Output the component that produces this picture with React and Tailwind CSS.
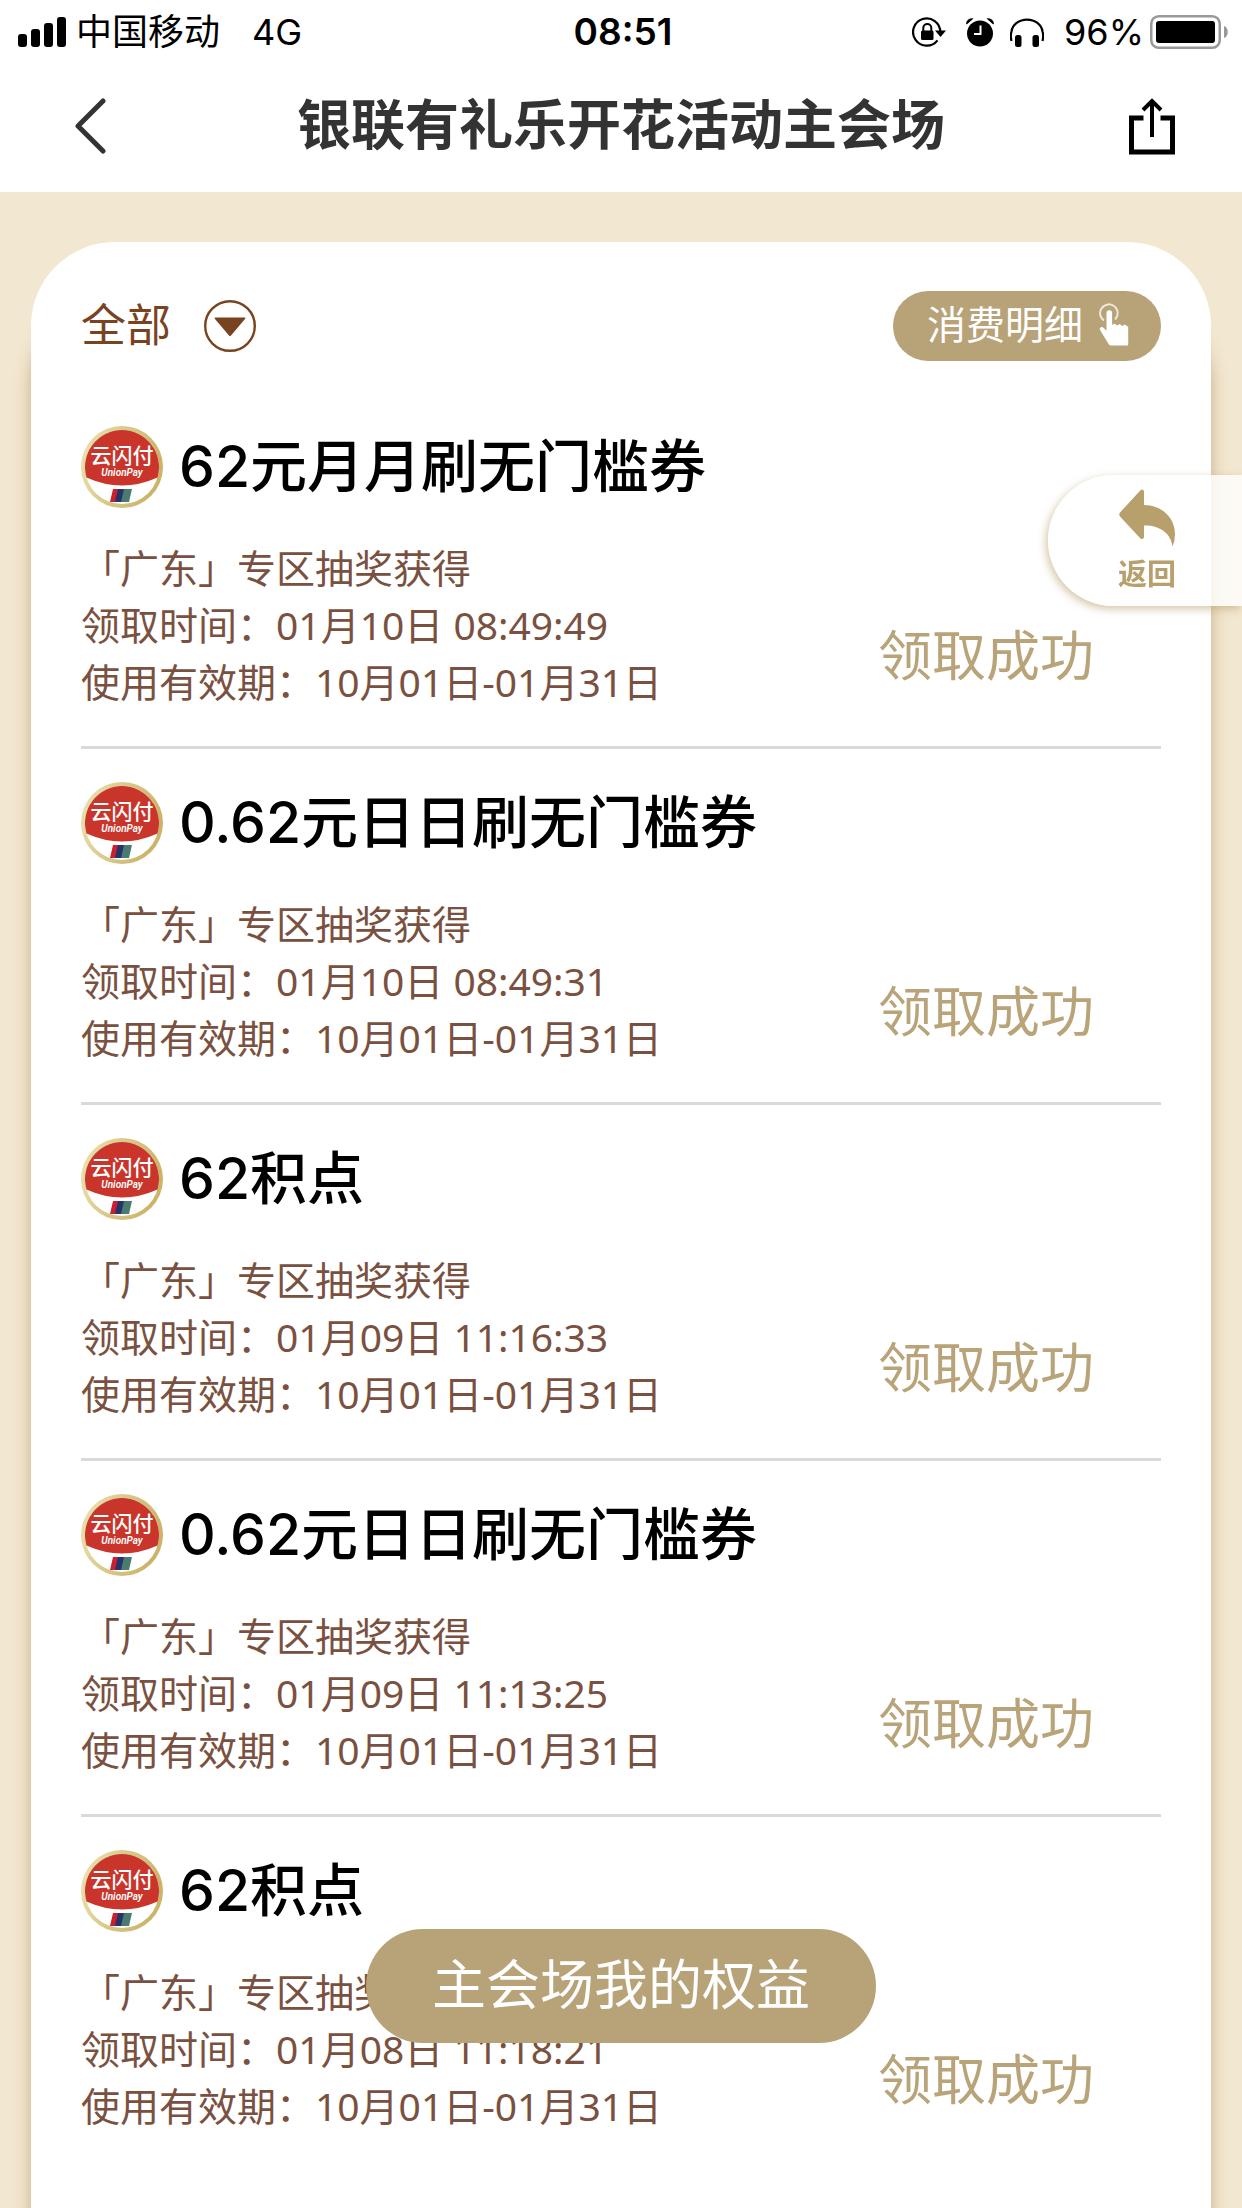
import React, { useState } from 'react';

const registros = [
    { id: 1, titulo: '62元月月刷无门槛券', hora: '01月10日 08:49:49' },
    { id: 2, titulo: '0.62元日日刷无门槛券', hora: '01月10日 08:49:31' },
    { id: 3, titulo: '62积点', hora: '01月09日 11:16:33' },
    { id: 4, titulo: '0.62元日日刷无门槛券', hora: '01月09日 11:13:25' },
    { id: 5, titulo: '62积点', hora: '01月08日 11:18:21' },
];

const SignalIcon = () => (
    <svg width="48" height="30" viewBox="0 0 48 30" aria-hidden="true">
        <rect x="0" y="17" width="9" height="13" rx="3" />
        <rect x="13" y="12" width="9" height="18" rx="3" />
        <rect x="26" y="6" width="9" height="24" rx="3" />
        <rect x="39" y="0" width="9" height="30" rx="3" />
    </svg>
);

const RotationLockIcon = () => (
    <svg width="34" height="30" viewBox="0 0 34 30" fill="none" aria-hidden="true">
        <path d="M28.3 15A13.6 13.6 0 1 0 25.5 23.3" stroke="#000" strokeWidth="2.2" />
        <path d="M23 13.5h11l-5.5 6.5z" fill="#000" />
        <rect x="9" y="13.5" width="12.5" height="9.5" rx="1.5" fill="#000" />
        <path d="M11.3 14v-3a4 4 0 0 1 8 0v3" stroke="#000" strokeWidth="2" />
    </svg>
);

const AlarmIcon = () => (
    <svg width="28" height="29" viewBox="0 0 28 29" aria-hidden="true">
        <circle cx="14" cy="15.5" r="13" />
        <path d="M0 5.5A6 6 0 0 1 7.5 0.5L0.8 6.5zM28 5.5A6 6 0 0 0 20.5 0.5L27.2 6.5z" />
        <path d="M14.5 7.5v8.5h-6.5" fill="none" stroke="#fff" strokeWidth="2" />
    </svg>
);

const HeadphonesIcon = () => (
    <svg width="34" height="30" viewBox="0 0 34 30" aria-hidden="true">
        <path d="M1.5 24C0.5 20 1 16 1.5 14.5a15.6 13.5 0 0 1 31 0C33 16 33.5 20 32.5 24" fill="none" stroke="#000" strokeWidth="2.2" />
        <rect x="5" y="18" width="6.5" height="12" rx="2.5" />
        <rect x="22.5" y="18" width="6.5" height="12" rx="2.5" />
    </svg>
);

const BatteryIcon = () => (
    <svg width="78" height="34" viewBox="0 0 78 34" aria-hidden="true">
        <rect x="1.25" y="1.25" width="68.5" height="31.5" rx="7.5" fill="none" stroke="#999" strokeWidth="2.5" />
        <rect x="6" y="6" width="59" height="22" rx="3" />
        <path d="M74 11c5 1 5 11 0 12z" fill="#999" />
    </svg>
);

const UnionPayLogo = () => (
    <svg className="shrink-0" width="82" height="82" viewBox="0 0 82 82" role="img" aria-label="云闪付">
        <defs>
            <linearGradient id="aro" x1="0" y1="0" x2="1" y2="0.3">
                <stop offset="0" stopColor="#efe5b0" />
                <stop offset="0.5" stopColor="#d9ca8c" />
                <stop offset="1" stopColor="#cbb468" />
            </linearGradient>
        </defs>
        <circle cx="41" cy="41" r="41" fill="url(#aro)" />
        <circle cx="41" cy="41" r="37" fill="#fff" />
        <path d="M5.5 51.5A37 37 0 1 1 76.5 51.5Q41 67.5 5.5 51.5z" fill="#c9352b" />
        <text x="41" y="37" textAnchor="middle" fill="#fff" fontSize="21" fontWeight="500" fontFamily="Noto Sans CJK SC, sans-serif">云闪付</text>
        <text x="41" y="50" textAnchor="middle" fill="#fff" fontSize="10" fontWeight="600" fontStyle="italic" fontFamily="Roboto, sans-serif">UnionPay</text>
        <path d="M32 63h7l-3 13h-7z" fill="#c8202f" />
        <path d="M37 63h7l-3 13h-7z" fill="#25336b" />
        <path d="M43 63h8l-3 13h-8z" fill="#4b7b70" />
    </svg>
);

const TapIcon = () => (
    <svg width="30" height="44" viewBox="0 0 30 44" fill="none" aria-hidden="true">
        <path d="M5 17.5A8.8 8.8 0 1 1 16 16.5" stroke="#fff" strokeOpacity="0.75" strokeWidth="2" />
        <path d="M7.5 10a2.8 2.8 0 0 1 5.6 0v12l2.4-1.5 2.6 2 2.6-1.5 2.6 2 2.6-1.5 3.3 2.5v17.5q0 1-1 1H12q-1.5 0-2.3-1.2L.8 26.5q-.6-1.8 1.2-2.3 1.6-.4 3 1l2.5 2.5z" fill="#fff" />
    </svg>
);

const Registro = ({ titulo, hora }) => (
    <li className="border-b-3 border-[#d9d9d9] pt-8 pb-9 last:border-b-0">
        <div className="flex h-[84px] items-center gap-4">
            <UnionPayLogo />
            <h2 className="text-[57px] leading-[84px] font-medium text-black">{titulo}</h2>
        </div>
        <div className="mt-[30px] flex justify-between pr-[67px]">
            <div className="font-['Noto_Sans','Noto_Sans_CJK_SC',sans-serif] text-[39px] leading-[57px] text-[#7a5140]">
                <p>「广东」专区抽奖获得</p>
                <p>领取时间：{hora}</p>
                <p>使用有效期：10月01日-01月31日</p>
            </div>
            <p className="self-end pb-[26px] text-[54px] leading-[54px] text-[#b8a478]">领取成功</p>
        </div>
    </li>
);

export default function App() {
    const [filtro, setFiltro] = useState('all');

    return (
        <div className="flex min-h-screen flex-col bg-[#f2e7d0] font-['Inter','Noto_Sans_CJK_SC',sans-serif]">
            <header className="bg-white">
                {/* Barra de estado */}
                <div className="grid h-16 grid-cols-[1fr_auto_1fr] items-center pr-3.5 pl-[18px] text-[36px] leading-[60px] text-black">
                    <div className="flex items-center">
                        <SignalIcon />
                        <span className="ml-2.5">中国移动</span>
                        <span className="ml-8">4G</span>
                    </div>
                    <span className="text-[37px] font-semibold">08:51</span>
                    <div className="flex items-center justify-end">
                        <RotationLockIcon />
                        <span className="ml-5"><AlarmIcon /></span>
                        <span className="ml-4"><HeadphonesIcon /></span>
                        <span className="ml-5">96%</span>
                        <span className="ml-1.5"><BatteryIcon /></span>
                    </div>
                </div>

                {/* Navegación */}
                <div className="flex h-32 items-center justify-between pr-[66px] pb-1 pl-[72px]">
                    <button type="button" aria-label="返回上一页" className="w-[42px]">
                        <svg width="36" height="56" viewBox="0 0 36 56" fill="none">
                            <path d="M31 3L6 28l25 25" stroke="#333" strokeWidth="5" strokeLinecap="round" strokeLinejoin="round" />
                        </svg>
                    </button>
                    <h1 className="text-[54px] leading-[72px] font-bold text-[#333]">银联有礼乐开花活动主会场</h1>
                    <button type="button" aria-label="分享">
                        <svg width="48" height="58" viewBox="0 0 48 58" fill="none" stroke="#000">
                            <path d="M15.5 21H3.5V55H44.5V21H32.5" strokeWidth="5" />
                            <path d="M24 40V3M15 13l9-9 9 9" strokeWidth="4" />
                        </svg>
                    </button>
                </div>
            </header>

            <main className="mx-[31px] mt-[50px] flex-1 rounded-t-[84px] bg-white px-[50px] pt-[49px] shadow-[0_60px_16px_rgba(160,115,65,0.5)]">
                <div className="flex h-[70px] items-center justify-between">
                    <label className="flex items-center gap-8 text-[#7a431f]">
                        <select
                            aria-label="类型"
                            className="appearance-none bg-transparent text-[45px] leading-[66px]"
                            value={filtro}
                            onChange={e => setFiltro(e.target.value)}
                        >
                            <option value="all">全部</option>
                        </select>
                        <svg width="52" height="52" viewBox="0 0 52 52" aria-hidden="true">
                            <circle cx="26" cy="26" r="24.8" fill="none" stroke="currentColor" strokeWidth="2.4" />
                            <path d="M11 17.5h30q1 .5 0 1.5L27 35.5q-1 1-2 0L11 19q-1-1 0-1.5z" fill="currentColor" />
                        </svg>
                    </label>
                    <button type="button" className="flex h-[70px] items-center gap-4 rounded-full bg-[#b8a278] pr-8 pb-0.5 pl-[34px] text-[39px] leading-[60px] text-white">
                        消费明细
                        <TapIcon />
                    </button>
                </div>

                <ul className="mt-8">
                    {registros.map(r => <Registro key={r.id} titulo={r.titulo} hora={r.hora} />)}
                </ul>
            </main>

            {/* Botones flotantes */}
            <button type="button" className="fixed top-[475px] right-0 flex h-[131px] w-[194px] flex-col items-center rounded-l-full bg-white/80 pt-[14px] pl-1 text-[#b8a06c] shadow-[-2px_3px_8px_rgba(184,160,108,0.6)]">
                <svg width="56" height="58" viewBox="0 0 56 58" fill="currentColor" aria-hidden="true">
                    <path d="M21.5 1.2Q24.5-.5 25 2.5V16C42 16 56 28 56 45Q56 52 53.5 57.5C52 44 40 36 25 36.5V48Q24.5 51 21.5 49.5L1 27.5Q-.5 25.5 1 23.5z" />
                </svg>
                <span className="mt-2 text-[29px] leading-10 font-bold">返回</span>
            </button>
            <button type="button" className="fixed bottom-[165px] left-1/2 h-[114px] -translate-x-1/2 rounded-full bg-[#b8a278] px-[66px] text-[54px] leading-[80px] whitespace-nowrap text-white">
                主会场我的权益
            </button>
        </div>
    );
}
